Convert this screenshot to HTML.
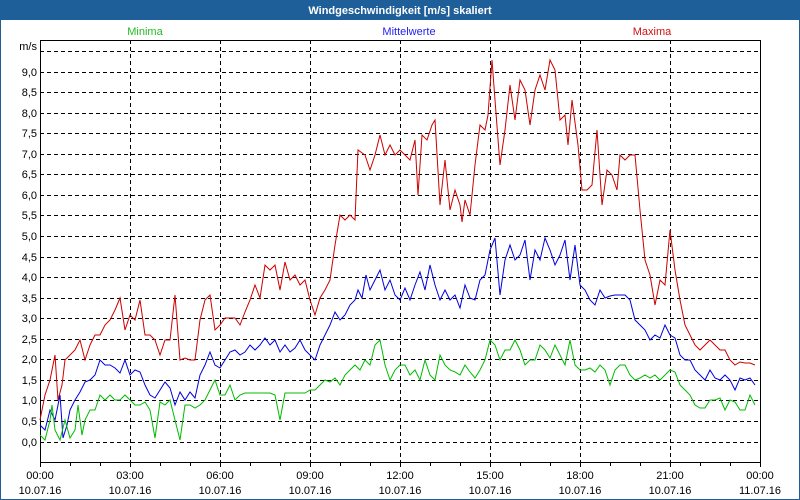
<!DOCTYPE html>
<html><head><meta charset="utf-8"><style>
html,body{margin:0;padding:0;background:#fff;}
svg{display:block;font-family:"Liberation Sans","DejaVu Sans",sans-serif;}
</style></head><body>
<svg width="800" height="500" viewBox="0 0 800 500" xmlns="http://www.w3.org/2000/svg">
<rect x="0" y="0" width="800" height="500" fill="#fff"/>
<rect x="0.5" y="0.5" width="799" height="499" fill="none" stroke="#1e5f99" stroke-width="1"/>
<rect x="0" y="0" width="800" height="20" fill="#1e5f99"/>
<text x="400" y="14" text-anchor="middle" font-size="11" font-weight="bold" fill="#fff">Windgeschwindigkeit [m/s] skaliert</text>
<text x="145" y="35" text-anchor="middle" font-size="11" fill="#22bb22">Minima</text>
<text x="409" y="35" text-anchor="middle" font-size="11" fill="#2222ee">Mittelwerte</text>
<text x="652" y="35" text-anchor="middle" font-size="11" fill="#cc1111">Maxima</text>
<g stroke="#000" stroke-width="1" stroke-dasharray="4,3" fill="none">
<path d="M40 51.5H760M40 72.5H760M40 92.5H760M40 113.5H760M40 133.5H760M40 154.5H760M40 174.5H760M40 195.5H760M40 215.5H760M40 236.5H760M40 257.5H760M40 277.5H760M40 298.5H760M40 318.5H760M40 339.5H760M40 359.5H760M40 380.5H760M40 400.5H760M40 421.5H760M40 442.5H760"/>
<path d="M130.5 40V462M220.5 40V462M310.5 40V462M400.5 40V462M490.5 40V462M580.5 40V462M670.5 40V462"/>
</g>
<rect x="40.5" y="40.5" width="720" height="422" fill="none" stroke="#000"/>
<g stroke="#000"><path d="M40.5 462V467M70.5 462V466M100.5 462V466M130.5 462V467M160.5 462V466M190.5 462V466M220.5 462V467M250.5 462V466M280.5 462V466M310.5 462V467M340.5 462V466M370.5 462V466M400.5 462V467M430.5 462V466M460.5 462V466M490.5 462V467M520.5 462V466M550.5 462V466M580.5 462V467M610.5 462V466M640.5 462V466M670.5 462V467M700.5 462V466M730.5 462V466M760.5 462V467"/></g>
<g font-size="11" fill="#000" text-anchor="end">
<text x="37" y="50">m/s</text>
<text x="37" y="76">9,0</text><text x="37" y="96">8,5</text><text x="37" y="117">8,0</text><text x="37" y="137">7,5</text><text x="37" y="158">7,0</text><text x="37" y="178">6,5</text><text x="37" y="199">6,0</text><text x="37" y="219">5,5</text><text x="37" y="240">5,0</text><text x="37" y="261">4,5</text><text x="37" y="281">4,0</text><text x="37" y="302">3,5</text><text x="37" y="322">3,0</text><text x="37" y="343">2,5</text><text x="37" y="363">2,0</text><text x="37" y="384">1,5</text><text x="37" y="404">1,0</text><text x="37" y="425">0,5</text><text x="37" y="446">0,0</text>
</g>
<g font-size="11" fill="#000" text-anchor="middle">
<text x="40" y="479">00:00</text><text x="40" y="494">10.07.16</text>
<text x="130" y="479">03:00</text><text x="130" y="494">10.07.16</text>
<text x="220" y="479">06:00</text><text x="220" y="494">10.07.16</text>
<text x="310" y="479">09:00</text><text x="310" y="494">10.07.16</text>
<text x="400" y="479">12:00</text><text x="400" y="494">10.07.16</text>
<text x="490" y="479">15:00</text><text x="490" y="494">10.07.16</text>
<text x="580" y="479">18:00</text><text x="580" y="494">10.07.16</text>
<text x="670" y="479">21:00</text><text x="670" y="494">10.07.16</text>
<text x="760" y="479">00:00</text><text x="760" y="494">11.07.16</text>
</g>
<g fill="none" stroke-width="1">
<polyline stroke="#cc0000" points="40,420 45,395 50,380 55,355 58,400 62,385 65,360 70,355 75,350 80,340 85,360 90,345 95,335 100,335 105,325 110,320 115,310 120,298 125,330 130,315 135,320 140,300 145,335 150,335 155,340 160,355 165,340 170,340 175,295 180,360 185,358 190,360 195,360 200,320 205,300 210,295 215,330 220,325 225,318 230,318 235,318 240,325 245,312 250,300 255,285 260,298 265,265 270,270 275,265 280,290 285,262 290,280 295,275 300,285 305,280 310,300 315,315 320,298 325,290 330,280 335,245 340,215 345,220 350,215 355,220 358,150 365,155 370,170 375,155 380,135 385,155 390,145 395,155 400,150 405,155 410,160 415,140 418,195 422,135 427,140 432,125 435,120 440,205 445,160 450,210 455,190 460,205 462,222 465,200 470,215 475,165 480,125 485,130 488,115 492,60 495,100 500,165 505,130 510,85 515,120 520,80 525,90 530,125 535,90 540,75 545,90 550,60 555,70 560,120 565,115 568,145 572,100 578,145 582,190 587,190 592,185 597,130 602,205 607,170 612,175 617,190 620,155 625,160 630,155 635,155 640,210 645,260 650,275 655,305 660,280 665,285 670,230 675,270 680,300 685,325 690,335 695,345 700,350 705,345 710,340 715,345 720,350 725,350 730,360 735,365 740,362 745,363 750,363 755,365"/>
<polyline stroke="#0000dd" points="40,425 45,430 50,410 55,420 60,395 63,438 67,425 70,410 75,400 80,392 85,382 90,380 95,375 100,360 105,365 110,365 115,368 120,373 125,360 130,375 135,370 140,372 145,385 150,395 155,398 160,390 165,382 170,388 175,405 180,392 185,400 190,392 195,398 200,375 205,365 210,352 215,365 220,368 225,360 230,352 235,350 240,355 245,352 250,345 255,350 260,345 265,338 270,345 275,340 280,352 285,345 290,352 295,348 300,340 305,350 310,355 315,360 320,345 325,335 330,325 335,312 340,320 345,315 350,305 355,300 358,290 362,298 366,275 370,290 375,280 380,270 385,290 390,280 395,295 400,300 405,288 410,300 415,285 420,272 425,290 430,265 435,285 440,300 445,290 450,300 455,295 460,308 465,285 470,298 475,300 480,280 485,275 490,250 495,238 500,295 505,260 510,245 515,260 520,255 525,240 530,280 535,250 540,260 545,238 550,250 555,265 560,255 565,240 570,280 575,245 580,285 585,290 590,300 595,305 600,290 605,298 610,296 615,295 620,295 625,295 630,300 635,320 640,325 645,330 650,340 655,335 660,338 665,325 670,335 675,338 680,355 685,360 690,360 695,370 700,375 705,380 710,370 715,378 720,380 725,375 730,380 735,390 740,378 745,380 750,378 755,385"/>
<polyline stroke="#00bb00" points="40,435 45,440 50,420 52,405 55,430 60,440 65,420 70,438 75,430 78,405 82,435 85,420 90,410 95,410 100,395 105,400 110,395 115,400 120,400 125,395 130,400 135,405 140,405 145,402 150,410 155,438 160,402 165,405 170,400 175,420 180,440 185,405 190,405 195,408 200,405 205,400 210,390 215,380 220,395 225,395 230,385 235,400 240,395 245,393 250,393 255,393 260,393 265,393 270,393 275,395 280,420 285,393 290,393 295,393 300,393 305,393 310,390 315,390 320,385 325,380 330,382 335,378 340,385 345,375 350,370 355,365 360,370 365,360 370,365 375,345 380,340 385,365 390,380 395,370 400,365 405,365 410,375 415,370 420,380 425,360 430,375 435,380 440,355 445,365 450,370 455,372 460,375 465,365 470,372 475,378 480,370 485,360 490,340 495,345 500,360 505,350 510,350 515,340 520,350 525,365 530,360 535,360 540,345 545,350 550,358 555,345 560,355 565,365 570,340 575,365 580,370 585,370 590,368 595,372 600,365 605,370 610,385 615,370 620,365 625,365 630,375 635,380 640,378 645,375 650,378 655,375 660,380 665,375 670,370 675,372 680,385 685,390 690,395 695,405 700,408 705,408 710,400 715,400 720,398 725,410 730,400 735,402 740,410 745,410 750,395 755,405"/>
</g>
</svg>
</body></html>
